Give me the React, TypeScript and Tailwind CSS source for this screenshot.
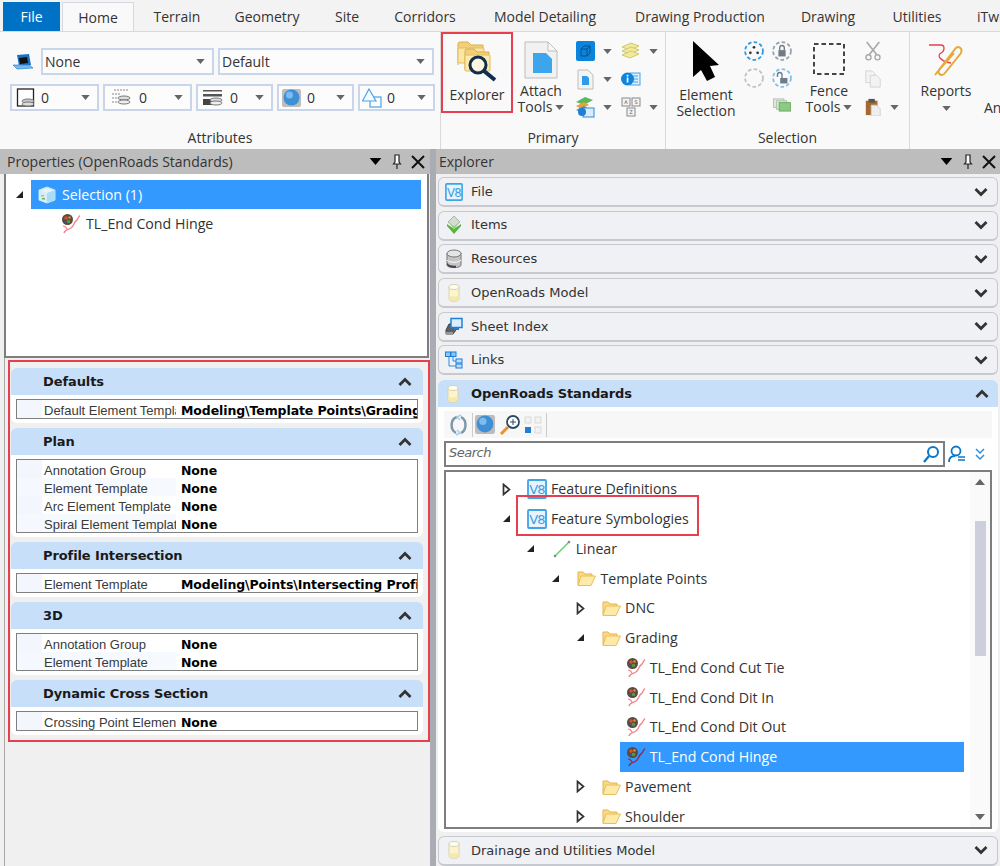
import React from "react";

const Tri = ({ c = "#666", w = 9, h = 5 }: { c?: string; w?: number; h?: number }) => (
  <svg width={w} height={h} viewBox="0 0 10 6" className="shrink-0"><polygon points="0,0 10,0 5,6" fill={c} /></svg>
);

const Chevron = ({ up = false }: { up?: boolean }) => (
  <svg width="14" height="10" viewBox="0 0 14 10" className="shrink-0">
    <path d={up ? "M1.5 8 L7 2.5 L12.5 8" : "M1.5 2 L7 7.5 L12.5 2"} fill="none" stroke="#333" strokeWidth="2.8" />
  </svg>
);

const V8 = ({ s = 20 }: { s?: number }) => (
  <svg width={s} height={s} viewBox="0 0 20 20" className="shrink-0">
    <rect x="1" y="1" width="18" height="18" rx="1" fill="#e8f4fd" stroke="#3fa3e6" strokeWidth="1.800" />
    <text x="10" y="15" textAnchor="middle" fontSize="13" fontFamily="'DejaVu Sans', sans-serif" fill="#3a9fe4" letterSpacing="-0.8">V8</text>
  </svg>
);

const Cyl = () => (
  <svg width="16" height="20" viewBox="0 0 16 20" className="shrink-0">
    <path d="M3 4 V16 C3 19 13 19 13 16 V4 Z" fill="#fbf4cf" stroke="#d9d2b0" />
    <ellipse cx="8" cy="4" rx="5" ry="2.5" fill="#fffdf0" stroke="#d9d2b0" />
    <path d="M3 12 C5 14 11 14 13 12 V16 C11 18.500 5 18.500 3 16 Z" fill="#f6e9ad" />
  </svg>
);

const Db = () => (
  <svg width="18" height="20" viewBox="0 0 18 20" className="shrink-0">
    <path d="M2 4 V16 C2 19.500 16 19.500 16 16 V4 Z" fill="#c4c4c4" stroke="#777" />
    <ellipse cx="9" cy="4.500" rx="7" ry="3.500" fill="#e4e4e4" stroke="#777" />
    <path d="M2 11 C4 14 14 14 16 11" fill="none" stroke="#fff" />
    <path d="M2 14 C4 17 10 17 11 16.500 V18.800 C7 19 3 18 2 16 Z" fill="#444" />
  </svg>
);

const Gem = () => (
  <svg width="16" height="20" viewBox="0 0 16 20" className="shrink-0">
    <polygon points="8,1 14,7 8,12 2,7" fill="#d4dcd0" stroke="#9aa89a" strokeWidth=".8" />
    <polygon points="1,9 8,14 15,9 15,11 8,19 1,11" fill="#57b23f" />
    <polygon points="4,9 8,12 12,9 8,15" fill="#8fd46a" />
  </svg>
);

const SheetIcon = () => (
  <svg width="18" height="18" viewBox="0 0 18 18" className="shrink-0">
    <polygon points="1,13 4,7 11,7 11,13 8,17 1,17" fill="#5f5f5f" stroke="#444" />
    <polygon points="1,15 8,15 8,17 1,17" fill="#9a9a9a" />
    <rect x="6" y="1.500" width="11" height="9" fill="#dbeeff" stroke="#1f7fd6" strokeWidth="1.500" />
    <rect x="9" y="11" width="5" height="2" fill="#1f7fd6" />
  </svg>
);

const LinksIcon = () => (
  <svg width="18" height="18" viewBox="0 0 18 18" className="shrink-0">
    <path d="M4 6 V15 H11 M8 6 V10 H11" fill="none" stroke="#2a8be0" />
    <rect x="0.500" y="1" width="5" height="4.500" fill="#8cc8f7" stroke="#1b7ed8" />
    <rect x="6" y="1" width="5" height="4.500" fill="#8cc8f7" stroke="#1b7ed8" />
    <rect x="11" y="8" width="6" height="4" fill="#bfe0fb" stroke="#1b7ed8" />
    <rect x="11" y="13" width="6" height="4" fill="#bfe0fb" stroke="#1b7ed8" />
  </svg>
);

const Folder = () => (
  <svg width="20" height="18" viewBox="0 0 20 18" className="shrink-0">
    <path d="M2 16 V3 H7 L9 5 H16 V8" fill="#fbd983" stroke="#e5b44d" />
    <polygon points="2,16.500 5,7 19.500,7 15,16.500" fill="#fde9a8" stroke="#eabf5c" />
  </svg>
);

const TL = ({ dim = false }: { dim?: boolean }) => {
  const c = dim ? "#8e2a52" : "#f0858c";
  return (
    <svg width="20" height="20" viewBox="0 0 20 20" className="shrink-0">
      <path d="M3 19 C4 15 7 16 10 14 C13 12 13 8 15 7 C17 6 17 3 19 1.500" fill="none" stroke={c} strokeWidth="1.400" />
      <path d="M2 12 C4 12 5 13 6 15" fill="none" stroke={c} strokeWidth="1.100" />
      <circle cx="6.500" cy="5.500" r="5.500" fill="#5a4a3e" />
      <circle cx="5" cy="4" r="1.800" fill="#d9502c" />
      <circle cx="8.500" cy="3.500" r="1.300" fill="#d98a3b" />
      <circle cx="7.500" cy="7.500" r="1.800" fill="#4f9b45" />
      <circle cx="4" cy="8" r="1" fill="#3a4fb0" />
    </svg>
  );
};

const LinearIcon = () => (
  <svg width="18" height="18" viewBox="0 0 18 18" className="shrink-0">
    <line x1="2" y1="16" x2="16" y2="2" stroke="#62cf6e" strokeWidth="1.500" />
    <circle cx="2" cy="16" r="1.300" fill="#888" />
    <circle cx="16" cy="2" r="1.300" fill="#888" />
  </svg>
);

const Cube = () => (
  <svg width="20" height="20" viewBox="0 0 20 20" className="shrink-0">
    <polygon points="10,2 18,5 18,15 10,18 2,15 2,5" fill="#e4f3fc" stroke="#bfe1f5" />
    <polygon points="10,8 18,5 18,15 10,18" fill="#a9dcf7" />
    <polygon points="2,5 10,8 10,18 2,15" fill="#d5eefb" />
    <rect x="4" y="10" width="3" height="1.500" fill="#e7b648" />
    <rect x="5" y="13" width="3" height="1.500" fill="#63b56a" />
  </svg>
);

const CaretOpen = () => (
  <svg width="9" height="9" viewBox="0 0 9 9"><polygon points="8,1 8,8 1,8" fill="#222" /></svg>
);
const CaretClosed = () => (
  <svg width="9" height="13" viewBox="0 0 9 13"><polygon points="1.500,1.500 7.500,6.500 1.500,11.500" fill="#fff" stroke="#333" strokeWidth="1.700" /></svg>
);

const PanelButtons = () => (
  <div className="flex items-center">
    <Tri c="#000" w={13} h={7} />
    <svg width="10" height="16" viewBox="0 0 10 16" className="ml-[10px]">
      <path d="M3 1 H7 V8 L8.500 10 H1.500 L3 8 Z M5 10 V15" fill="#fff" stroke="#222" strokeWidth="1.200" />
    </svg>
    <svg width="14" height="14" viewBox="0 0 14 14" className="ml-[9px]">
      <path d="M1 1 L13 13 M13 1 L1 13" stroke="#111" strokeWidth="2" />
    </svg>
  </div>
);

const SmallArrow = ({ className = "" }: { className?: string }) => <span className={className}><Tri /></span>;

const Combo = ({ w, pl, icon, v, gap }: { w: string; pl: string; icon?: React.ReactNode; v: string; gap: string }) => (
  <div className={`${w} ${pl} h-[27px] flex items-center border-2 border-[#c9d6ea] bg-[#fcfcfc] text-[14px] text-[#333]`}>
    {icon}
    <span className={gap}>{v}</span>
    <span className="ml-auto mr-[7px]"><Tri /></span>
  </div>
);

const LineA = () => (
  <svg width="20" height="20" viewBox="0 0 20 20"><rect x="1.500" y="1" width="16" height="17" fill="#fff" stroke="#222" strokeWidth="1.300" /><ellipse cx="12" cy="13" rx="6" ry="2" fill="#c8c8c8" stroke="#777" /><ellipse cx="12" cy="16" rx="6" ry="2" fill="#dcdcdc" stroke="#777" /></svg>
);
const LineB = () => (
  <svg width="20" height="20" viewBox="0 0 20 20"><path d="M3 2 H18 M1 6 H9 M1 10 H6 M1 14 H6" stroke="#888" strokeDasharray="2 1" /><ellipse cx="13" cy="10" rx="6" ry="2" fill="#ddd" stroke="#777" /><ellipse cx="13" cy="14" rx="6" ry="2" fill="#eee" stroke="#777" /></svg>
);
const LineC = () => (
  <svg width="20" height="20" viewBox="0 0 20 20"><rect x="0" y="2" width="19" height="1.500" fill="#555" /><rect x="0" y="6" width="19" height="2.500" fill="#555" /><rect x="0" y="11" width="9" height="6" fill="#444" /><ellipse cx="13" cy="12" rx="6" ry="2" fill="#ddd" stroke="#777" /><ellipse cx="13" cy="15" rx="6" ry="2" fill="#eee" stroke="#777" /></svg>
);
const Globe = ({ s = 20 }: { s?: number }) => (
  <svg width={s} height={s} viewBox="0 0 20 20"><rect x="0" y="1" width="19" height="18" rx="2" fill="#bcbcbc" /><circle cx="9.500" cy="9.500" r="8" fill="#3f8fd6" /><circle cx="7.500" cy="7" r="3.500" fill="#7cbcf0" /></svg>
);
const Shapes = () => (
  <svg width="20" height="20" viewBox="0 0 20 20"><rect x="8" y="9" width="11" height="10" fill="none" stroke="#4aa3e6" strokeWidth="1.200" /><polygon points="7,1 14,13 0.500,13" fill="#f4faff" stroke="#4aa3e6" strokeWidth="1.200" /></svg>
);

const Btn = ({ lines, icon, arrow, mt }: { lines: string[]; icon: React.ReactNode; arrow?: boolean; mt: string }) => (
  <div className="w-full flex flex-col items-center text-[14px] leading-[16px] text-[#333]">
    {icon}
    <div className={`${mt} flex flex-col items-center`}>
      {lines.map((l, i) => (
        <div key={l} className="flex items-center gap-[3px] whitespace-nowrap">{l}{arrow && i === lines.length - 1 ? <Tri /> : null}</div>
      ))}
    </div>
  </div>
);

const SmallGridIcon = ({ children }: { children: React.ReactNode }) => <div className="w-[20px] h-[24px] flex items-center justify-center">{children}</div>;

const Ribbon = () => (
  <div className="h-[117px] shrink-0 bg-[#f9f9f9] flex">
    {/* Attributes */}
    <div className="w-[441px] flex flex-col border-r border-[#d9d9d9]">
      <div className="h-[95px] pt-[16px] flex flex-col gap-[9px]">
        <div className="flex items-center">
          <svg width="22" height="18" viewBox="0 0 22 18" className="ml-[12px] mr-[7px]">
            <polygon points="5,2 17,1 19,12 7,13" fill="#1b6fc4" />
            <polygon points="7,5 15,4 16,10 8,11" fill="#111" />
            <polygon points="1,12 17,12 21,15 5,16" fill="#7ab8ea" stroke="#2a85d6" strokeWidth=".7" />
          </svg>
          <Combo w="w-[173px]" pl="pl-[2px]" v="None" gap="" />
          <div className="w-[4px]" />
          <Combo w="w-[216px]" pl="pl-[2px]" v="Default" gap="" />
        </div>
        <div className="flex items-center pl-[10px] gap-[4px]">
          <Combo w="w-[89px]" pl="pl-[4px]" icon={<LineA />} v="0" gap="ml-[5px]" />
          <Combo w="w-[89px]" pl="pl-[6px]" icon={<LineB />} v="0" gap="ml-[8px]" />
          <Combo w="w-[77px]" pl="pl-[5px]" icon={<LineC />} v="0" gap="ml-[7px]" />
          <Combo w="w-[77px]" pl="pl-[3px]" icon={<Globe />} v="0" gap="ml-[5px]" />
          <Combo w="w-[77px]" pl="pl-[2px]" icon={<Shapes />} v="0" gap="ml-[5px]" />
        </div>
      </div>
      <div className="h-[22px] text-center text-[14px] leading-[22px] text-[#333]">Attributes</div>
    </div>
    {/* Primary */}
    <div className="w-[225px] flex flex-col border-r border-[#d9d9d9]">
      <div className="h-[95px] flex">
        <div className="w-[72px] h-[81px] border-2 border-[#e5404f] flex flex-col items-center text-[14px] text-[#333]">
          <svg width="42" height="42" viewBox="0 0 42 42" className="mt-[6px] mb-[4px]">
            <path d="M2 25 V4 Q2 2 4 2 H12 L15 5 H27 V10 H2" fill="#f2cf7a" stroke="#d9ae4e" />
            <rect x="2" y="8" width="26" height="15" rx="1" fill="#fbe6a6" stroke="#e3bb5c" />
            <path d="M9 30 V11 Q9 9 11 9 H18 L21 12 H33 V18 H9" fill="#f2cf7a" stroke="#d9ae4e" />
            <rect x="9" y="15" width="25" height="16" rx="1" fill="#fde9ac" stroke="#e3bb5c" />
            <circle cx="22" cy="25" r="8" fill="#fff" fillOpacity=".6" stroke="#0f2f4d" strokeWidth="3" />
            <line x1="28" y1="31" x2="39" y2="40" stroke="#0f2f4d" strokeWidth="4" />
          </svg>
          <span className="leading-[18px]">Explorer</span>
        </div>
        <div className="w-[56px] flex justify-center pt-[9px]">
          <Btn lines={["Attach", "Tools"]} arrow mt="mt-[4px]" icon={
            <svg width="34" height="38" viewBox="0 0 34 38"><polygon points="1,1 24,1 33,10 33,37 1,37" fill="#f1f1f1" stroke="#bdbdbd" /><polygon points="24,1 24,10 33,10" fill="#fafafa" stroke="#bdbdbd" /><polygon points="9,12 22,12 28,18 28,32 9,32" fill="#3ba6ee" /></svg>
          } />
        </div>
        <div className="ml-[6px] pt-[6px] flex flex-col gap-[2px]">
          {[0, 1, 2].map((r) => (
            <div key={r} className="h-[26px] flex items-center">
              <SmallGridIcon>
                {r === 0 && <svg width="19" height="20" viewBox="0 0 19 20"><rect width="19" height="20" rx="2" fill="#0a84dc" /><path d="M5 8 L8 5 H14 V12 L11 15 H5 Z M5 8 H11 V15 M11 8 L14 5" fill="none" stroke="#0b4f85" /></svg>}
                {r === 1 && <svg width="17" height="21" viewBox="0 0 17 21"><polygon points="1,1 11,1 16,6 16,20 1,20" fill="#f3f3f3" stroke="#bdbdbd" /><polygon points="5,7 10,7 12,9 12,16 5,16" fill="#2f9ae8" /></svg>}
                {r === 2 && <svg width="20" height="22" viewBox="0 0 20 22"><polygon points="1,6 10,1 18,4 9,9" fill="#5cb85c" /><polygon points="1,10 9,6 14,9 6,13" fill="#e7a23b" /><polygon points="1,14 9,10 12,12 6,16" fill="#4d86c6" /><rect x="8" y="12" width="11" height="9" fill="#d8ecfb" stroke="#2a8be0" /><circle cx="7" cy="16" r="4" fill="#1f7fd6" /></svg>}
              </SmallGridIcon>
              <SmallArrow className="ml-[8px]" />
              <div className="ml-[9px]">
                <SmallGridIcon>
                  {r === 0 && <svg width="20" height="20" viewBox="0 0 20 20"><polygon points="1,6 10,2 18,5 9,9" fill="#f1eb97" stroke="#cfc877" /><polygon points="1,10 10,6 18,9 9,13" fill="#f1eb97" stroke="#cfc877" /><polygon points="1,14 10,10 18,13 9,17" fill="#f1eb97" stroke="#cfc877" /></svg>}
                  {r === 1 && <svg width="20" height="16" viewBox="0 0 20 16"><rect x="9" y="2" width="10" height="12" fill="#d9eefc" stroke="#4aa3e6" /><path d="M12 5 H17 M12 8 H17 M12 11 H17" stroke="#4aa3e6" /><circle cx="6.500" cy="8" r="6.500" fill="#0d84e0" /><rect x="5.700" y="6.500" width="1.700" height="5" fill="#fff" /><rect x="5.700" y="3.800" width="1.700" height="1.700" fill="#fff" /></svg>}
                  {r === 2 && <svg width="20" height="20" viewBox="0 0 20 20" fontFamily="'DejaVu Sans', sans-serif" fontSize="5" fill="#555" textAnchor="middle"><rect x="1" y="1" width="8" height="8" fill="#f4f4f4" stroke="#888" /><rect x="11" y="1" width="8" height="8" fill="#f4f4f4" stroke="#888" /><rect x="6" y="11" width="8" height="8" fill="#f4f4f4" stroke="#888" /><text x="5" y="7">A</text><text x="15" y="7">S</text><text x="10" y="17">Z</text></svg>}
                </SmallGridIcon>
              </div>
              {r !== 1 && <SmallArrow className="ml-[8px]" />}
            </div>
          ))}
        </div>
      </div>
      <div className="h-[22px] text-center text-[14px] leading-[22px] text-[#333]">Primary</div>
    </div>
    {/* Selection */}
    <div className="w-[244px] flex flex-col border-r border-[#d9d9d9]">
      <div className="h-[95px] flex">
        <div className="w-[78px] pl-[2px] pt-[9px] flex justify-center">
          <Btn lines={["Element", "Selection"]} mt="mt-[6px]" icon={
            <svg width="28" height="40" viewBox="0 0 28 40"><polygon points="1,0 27,24 18,25 23,36 15,40 9,29 1,36" fill="#000" /></svg>
          } />
        </div>
        <div className="w-[52px] pt-[9px] flex flex-col">
          <div className="flex gap-[8px]">
            <svg width="20" height="20" viewBox="0 0 22 22"><circle cx="11" cy="11" r="9.800" fill="none" stroke="#2f9ae8" strokeWidth="2" strokeDasharray="4 2.500" /><circle cx="11" cy="7" r="1.500" fill="#333" /><circle cx="7" cy="13" r="1.500" fill="#333" /><circle cx="15" cy="13" r="1.500" fill="#333" /></svg>
            <svg width="20" height="20" viewBox="0 0 22 22"><circle cx="11" cy="11" r="9.800" fill="none" stroke="#9aa3ad" strokeWidth="2" strokeDasharray="4 2.500" /><rect x="7" y="10" width="8" height="7" fill="#6f7c88" /><path d="M8.500 10 V7.500 A2.500 2.500 0 0 1 13.500 7.500 V10" fill="none" stroke="#6f7c88" strokeWidth="1.500" /></svg>
          </div>
          <div className="flex gap-[8px] mt-[7px]">
            <svg width="20" height="20" viewBox="0 0 22 22"><circle cx="11" cy="11" r="9.800" fill="none" stroke="#c2c2c2" strokeWidth="2" strokeDasharray="4 2.500" /></svg>
            <svg width="20" height="20" viewBox="0 0 22 22"><circle cx="11" cy="11" r="9.800" fill="none" stroke="#7fc2f0" strokeWidth="2" strokeDasharray="4 2.500" /><rect x="9" y="11" width="8" height="6" fill="#6f7c88" /><path d="M6 10 V7.500 A2.500 2.500 0 0 1 11 7.500 V11" fill="none" stroke="#6f7c88" strokeWidth="1.500" /></svg>
          </div>
          <div className="mt-[10px] ml-[28px]">
            <svg width="20" height="14" viewBox="0 0 20 15"><rect x="1" y="1" width="11" height="9" fill="#e8e8e8" stroke="#b5b5b5" /><rect x="4" y="3" width="11" height="9" fill="#d5ecd2" stroke="#a7c7a3" /><rect x="7" y="5" width="12" height="9" fill="#8ccb83" stroke="#6aa861" /></svg>
          </div>
        </div>
        <div className="w-[66px] pt-[11px] flex justify-center">
          <Btn lines={["Fence", "Tools"]} arrow mt="mt-[8px]" icon={
            <svg width="32" height="32" viewBox="0 0 32 32"><rect x="1" y="1" width="30" height="30" fill="none" stroke="#444" strokeWidth="2" strokeDasharray="4.500 3" /></svg>
          } />
        </div>
        <div className="ml-[2px] pt-[9px] flex flex-col">
          <svg width="18" height="20" viewBox="0 0 20 22"><path d="M3 1 L14 15 M17 1 L6 15" stroke="#a8a8a8" strokeWidth="1.800" /><circle cx="5" cy="18" r="2.800" fill="none" stroke="#a8a8a8" strokeWidth="1.500" /><circle cx="15" cy="18" r="2.800" fill="none" stroke="#a8a8a8" strokeWidth="1.500" /></svg>
          <svg width="18" height="20" viewBox="0 0 20 20" className="mt-[8px]"><polygon points="2,1 9,1 12,4 12,14 2,14" fill="#f3f3f3" stroke="#d3d3d3" /><polygon points="7,6 14,6 18,10 18,19 7,19" fill="#f3f3f3" stroke="#d3d3d3" /></svg>
          <div className="flex items-center mt-[9px]">
            <svg width="18" height="18" viewBox="0 0 18 20"><rect x="1" y="3" width="13" height="16" fill="#a5692d" /><rect x="4" y="1" width="7" height="4" fill="#555" /><polygon points="7,8 13,8 17,12 17,20 7,20" fill="#eeeeee" stroke="#cfcfcf" /></svg>
            <SmallArrow className="ml-[8px]" />
          </div>
        </div>
      </div>
      <div className="h-[22px] text-center text-[14px] leading-[22px] text-[#333]">Selection</div>
    </div>
    {/* Reports */}
    <div className="flex-1 min-w-0 flex pl-[8px] pt-[11px] overflow-hidden text-[14px] text-[#333] leading-[16px]">
      <div className="w-[56px] shrink-0 flex flex-col items-center">
        <svg width="38" height="36" viewBox="0 0 38 36">
          <path d="M2 2 H14 C18 2 18 8 14 10 C10 12 12 18 24 20" fill="none" stroke="#e5404f" strokeWidth="1.300" />
          <path d="M8 32 L28 6 C31 2 36 5 34 10 L18 30 C15 34 10 31 12 27 L27 10" fill="none" stroke="#e6a93a" strokeWidth="2" />
        </svg>
        <span className="mt-[4px]">Reports</span>
        <span className="mt-[7px]"><Tri /></span>
      </div>
      <span className="ml-[10px] mt-[57px] whitespace-nowrap">Annotate</span>
    </div>
  </div>
);

const Rows = ({ rows }: { rows: [string, string][] }) => (
  <div className="border border-[#7f7f7f] bg-white">
    {rows.map(([l, v], i) => (
      <div key={l} className="h-[18px] flex items-center">
        <div className={`w-[25px] h-full shrink-0 ${i % 2 ? "bg-[#f5f8fe]" : "bg-[#f3f6fd]"}`} />
        <div className={`w-[134px] h-full shrink-0 pl-[2px] overflow-hidden whitespace-nowrap text-[13px] leading-[22px] text-[#3a3a3a] [font-family:'Liberation_Sans',sans-serif] ${i % 2 ? "bg-[#f6f9fe]" : "bg-white"}`}>{l}</div>
        <div className="flex-1 min-w-0 h-full pl-[5px] overflow-hidden whitespace-nowrap text-[12.5px] leading-[22px] font-bold text-black [font-family:'DejaVu_Sans',sans-serif] tracking-[-0.1px]">{v}</div>
      </div>
    ))}
  </div>
);

const Section = ({ title, rows }: { title: string; rows: [string, string][] }) => (
  <div className="rounded-[6px] overflow-hidden">
    <div className="h-[27px] bg-[#c8dff9] flex items-center pl-[32px] pr-[11px] justify-between">
      <span className="text-[13px] font-bold text-[#1a1a1a] [font-family:'DejaVu_Sans',sans-serif] tracking-[-0.1px]">{title}</span>
      <Chevron up />
    </div>
    <div className="bg-white px-[5px] py-[4px]"><Rows rows={rows} /></div>
  </div>
);

const Accordion = ({ icon, title }: { icon: React.ReactNode; title: string }) => (
  <div className="h-[30px] shrink-0 rounded-[6px] border border-[#c6c9d0] border-b-2 bg-[#eff1f5] flex items-center pl-[5px] pr-[9px]">
    <div className="w-[20px] flex justify-center">{icon}</div>
    <span className="ml-[7px] text-[13px] text-[#333] [font-family:'DejaVu_Sans',sans-serif]">{title}</span>
    <span className="ml-auto"><Chevron /></span>
  </div>
);

type Node = { level: number; open?: boolean; leaf?: boolean; icon: React.ReactNode; text: string; sel?: boolean };
const nodes: Node[] = [
  { level: 0, icon: <V8 />, text: "Feature Definitions" },
  { level: 0, open: true, icon: <V8 />, text: "Feature Symbologies" },
  { level: 1, open: true, icon: <LinearIcon />, text: "Linear" },
  { level: 2, open: true, icon: <Folder />, text: "Template Points" },
  { level: 3, icon: <Folder />, text: "DNC" },
  { level: 3, open: true, icon: <Folder />, text: "Grading" },
  { level: 4, leaf: true, icon: <TL />, text: "TL_End Cond Cut Tie" },
  { level: 4, leaf: true, icon: <TL />, text: "TL_End Cond Dit In" },
  { level: 4, leaf: true, icon: <TL />, text: "TL_End Cond Dit Out" },
  { level: 4, leaf: true, icon: <TL dim />, text: "TL_End Cond Hinge", sel: true },
  { level: 3, icon: <Folder />, text: "Pavement" },
  { level: 3, icon: <Folder />, text: "Shoulder" },
];

const tabs: [string, string][] = [
  ["Terrain", "w-[80px]"],
  ["Geometry", "w-[100px]"],
  ["Site", "w-[60px]"],
  ["Corridors", "w-[96px]"],
  ["Model Detailing", "w-[144px]"],
  ["Drawing Production", "w-[166px]"],
  ["Drawing", "w-[90px]"],
  ["Utilities", "w-[88px]"],
];

export default function App() {
  return (
    <div className="w-[1000px] h-[866px] overflow-hidden bg-[#f0f0f0] flex flex-col [font-family:'Open_Sans',sans-serif]">
      {/* Tabs */}
      <div className="h-[32px] shrink-0 bg-[#f3f3f3] border-b border-[#d4d9e2] pt-[2px] pl-[3px] flex text-[14px] text-[#333] whitespace-nowrap overflow-hidden">
        <div className="w-[57px] shrink-0 h-[29px] bg-[#0072c6] text-white flex items-center justify-center">File</div>
        <div className="ml-[2px] mr-[3px] w-[72px] shrink-0 h-[30px] bg-[#f9f9f9] border border-b-0 border-[#d4d9e2] flex items-center justify-center">Home</div>
        {tabs.map(([t, w]) => (
          <div key={t} className={`${w} shrink-0 h-[29px] flex items-center justify-center`}>{t}</div>
        ))}
        <div className="ml-[16px] shrink-0 h-[29px] flex items-center">iTwin</div>
      </div>
      <Ribbon />
      {/* Panels */}
      <div className="flex-1 min-h-0 flex">
        {/* Left */}
        <div className="w-[430px] shrink-0 flex flex-col">
          <div className="h-[25px] shrink-0 bg-[#bdbdbd] flex items-center justify-between pl-[7px] pr-[5px] text-[14px] leading-[22px] text-[#333]">
            <span>Properties (OpenRoads Standards)</span>
            <PanelButtons />
          </div>
          <div className="ml-[4px] w-[425px] h-[184px] shrink-0 border-2 border-[#7e7e7e] border-t-0 bg-white pt-[6px] text-[14.2px]">
            <div className="h-[29px] flex items-center">
              <span className="ml-[9px] w-[16px]"><CaretOpen /></span>
              <div className="w-[390px] h-full bg-[#3399ff] text-white flex items-center pl-[6px] gap-[5px]">
                <Cube /><span>Selection (1)</span>
              </div>
            </div>
            <div className="h-[30px] flex items-center pl-[55px] gap-[5px] text-[#333]">
              <TL /><span>TL_End Cond Hinge</span>
            </div>
          </div>
          <div className="ml-[4px] flex-1 min-h-0 border-l border-[#a8a8a8] pl-[3px] pt-[2px]">
            <div className="w-[422px] h-[382px] border-2 border-[#e5404f] pt-[6px] pl-[1px]">
              <div className="w-[412px] flex flex-col gap-[5px]">
                <Section title="Defaults" rows={[["Default Element Template", "Modeling\\Template Points\\Grading\\Hinge"]]} />
                <Section title="Plan" rows={[["Annotation Group", "None"], ["Element Template", "None"], ["Arc Element Template", "None"], ["Spiral Element Template", "None"]]} />
                <Section title="Profile Intersection" rows={[["Element Template", "Modeling\\Points\\Intersecting Profile"]]} />
                <Section title="3D" rows={[["Annotation Group", "None"], ["Element Template", "None"]]} />
                <Section title="Dynamic Cross Section" rows={[["Crossing Point Element", "None"]]} />
              </div>
            </div>
          </div>
        </div>
        {/* Splitter */}
        <div className="w-[6px] shrink-0 bg-[#a9adb3]" />
        {/* Right */}
        <div className="w-[564px] shrink-0 flex flex-col min-h-0 overflow-hidden">
          <div className="h-[25px] shrink-0 bg-[#bdbdbd] flex items-center justify-between pl-[3px] pr-[4px] text-[14px] leading-[22px] text-[#333]">
            <span>Explorer</span>
            <PanelButtons />
          </div>
          <div className="pt-[3px] pl-[2px] pr-[2px] flex flex-col gap-[3.7px]">
            <Accordion icon={<V8 s={18} />} title="File" />
            <Accordion icon={<Gem />} title="Items" />
            <Accordion icon={<Db />} title="Resources" />
            <Accordion icon={<Cyl />} title="OpenRoads Model" />
            <Accordion icon={<SheetIcon />} title="Sheet Index" />
            <Accordion icon={<LinksIcon />} title="Links" />
            <div className="mt-[1px] shrink-0 rounded-[6px] overflow-hidden bg-white">
              <div className="h-[27px] bg-[#c8dff9] flex items-center pl-[5px] pr-[9px]">
                <div className="w-[20px] flex justify-center"><Cyl /></div>
                <span className="ml-[8px] text-[13px] font-bold text-[#1a1a1a] [font-family:'DejaVu_Sans',sans-serif] tracking-[-0.1px]">OpenRoads Standards</span>
                <span className="ml-auto"><Chevron up /></span>
              </div>
              <div className="px-[6px] pt-[4px] pb-[3px]">
                <div className="h-[27px] bg-[#f7f7f7] flex items-center pl-[5px]">
                  <svg width="20" height="22" viewBox="0 0 20 22"><path d="M8 3 C1 5 1 16 7 19 M12 3 C18 6 18 16 12 19" fill="none" stroke="#7f97a8" strokeWidth="2.500" /><path d="M12 1 L8 3 L11 6 M7 21 L11 19 L8 16" fill="none" stroke="#9fd0ee" strokeWidth="1.500" /></svg>
                  <div className="ml-[3px] mr-[2px] w-px h-[24px] bg-[#cccccc]" />
                  <Globe s={21} />
                  <svg width="22" height="22" viewBox="0 0 22 22" className="ml-[3px]"><circle cx="14" cy="8" r="6" fill="#fff" stroke="#2d4a63" strokeWidth="1.800" /><path d="M11 8 H17 M14 5 V11" stroke="#2d4a63" /><line x1="9" y1="13" x2="2" y2="20" stroke="#e8912f" strokeWidth="3" /></svg>
                  <svg width="18" height="20" viewBox="0 0 18 20" className="ml-[3px]"><rect x="1" y="2" width="6" height="6" fill="#f2f2f2" stroke="#dadada" /><rect x="11" y="2" width="6" height="6" fill="#f2f2f2" stroke="#dadada" /><rect x="1" y="12" width="6" height="6" fill="#1f7fd6" /><rect x="11" y="12" width="6" height="6" fill="#f2f2f2" stroke="#dadada" /></svg>
                  <div className="ml-[4px] w-px h-[24px] bg-[#cccccc]" />
                </div>
                <div className="mt-[3px] flex items-center">
                  <div className="w-[501px] h-[26px] border-2 border-[#7e7e7e] bg-white flex items-center pl-[3px] pr-[3px] justify-between">
                    <span className="italic text-[13px] leading-[18px] pb-[2px] text-[#666] [font-family:'DejaVu_Sans',sans-serif] tracking-[-0.5px]">Search</span>
                    <svg width="18" height="18" viewBox="0 0 18 18"><circle cx="11" cy="7" r="5" fill="none" stroke="#0c76c9" strokeWidth="2" /><line x1="7" y1="11" x2="2" y2="17" stroke="#0c76c9" strokeWidth="2.200" /></svg>
                  </div>
                  <svg width="18" height="18" viewBox="0 0 18 18" className="ml-[3px]"><circle cx="8" cy="6" r="4.500" fill="none" stroke="#0c76c9" strokeWidth="1.800" /><path d="M1 17 C1 12 4 11 7 11" fill="none" stroke="#0c76c9" strokeWidth="1.800" /><path d="M10 12 H17 M10 15 H17" stroke="#0c76c9" strokeWidth="1.300" /></svg>
                  <svg width="12" height="14" viewBox="0 0 12 14" className="ml-[8px]"><path d="M2 2 L6 6 L10 2 M2 8 L6 12 L10 8" fill="none" stroke="#2f8fdc" strokeWidth="1.500" /></svg>
                </div>
                <div className="relative mt-[3px] h-[359px] w-[548px] border-2 border-[#7e7e7e] bg-white flex text-[14.2px] text-[#333] overflow-hidden">
                  <div className="flex-1 min-w-0 pt-[2px]">
                    {nodes.map((n) => (
                      <div key={n.text} className="h-[29.75px] flex items-center" style={{ paddingLeft: 53 + 24.7 * n.level }}>
                        <div className="w-[14px] flex justify-center shrink-0">
                          {n.leaf ? null : n.open ? <CaretOpen /> : <CaretClosed />}
                        </div>
                        <div className={`ml-[8px] w-[344px] h-full flex items-center pl-[6px] gap-[4px] whitespace-nowrap ${n.sel ? "bg-[#3399ff] text-white" : ""}`}>
                          <div className="w-[20px] flex justify-center shrink-0">{n.icon}</div><span>{n.text}</span>
                        </div>
                      </div>
                    ))}
                  </div>
                  <div className="w-[20px] shrink-0 bg-[#fafafa] flex flex-col items-center pt-[7px] pb-[7px]">
                    <svg width="10" height="6" viewBox="0 0 10 6"><polygon points="0,6 10,6 5,0" fill="#666" /></svg>
                    <div className="mt-[36px] w-[11px] h-[135px] bg-[#cdd0dc]" />
                    <span className="mt-auto"><Tri c="#666" w={10} h={6} /></span>
                  </div>
                  <div className="absolute left-[70px] top-[23px] w-[183px] h-[41px] border-2 border-[#e5404f]" />
                </div>
              </div>
            </div>
            <Accordion icon={<Cyl />} title="Drainage and Utilities Model" />
          </div>
        </div>
      </div>
    </div>
  );
}
